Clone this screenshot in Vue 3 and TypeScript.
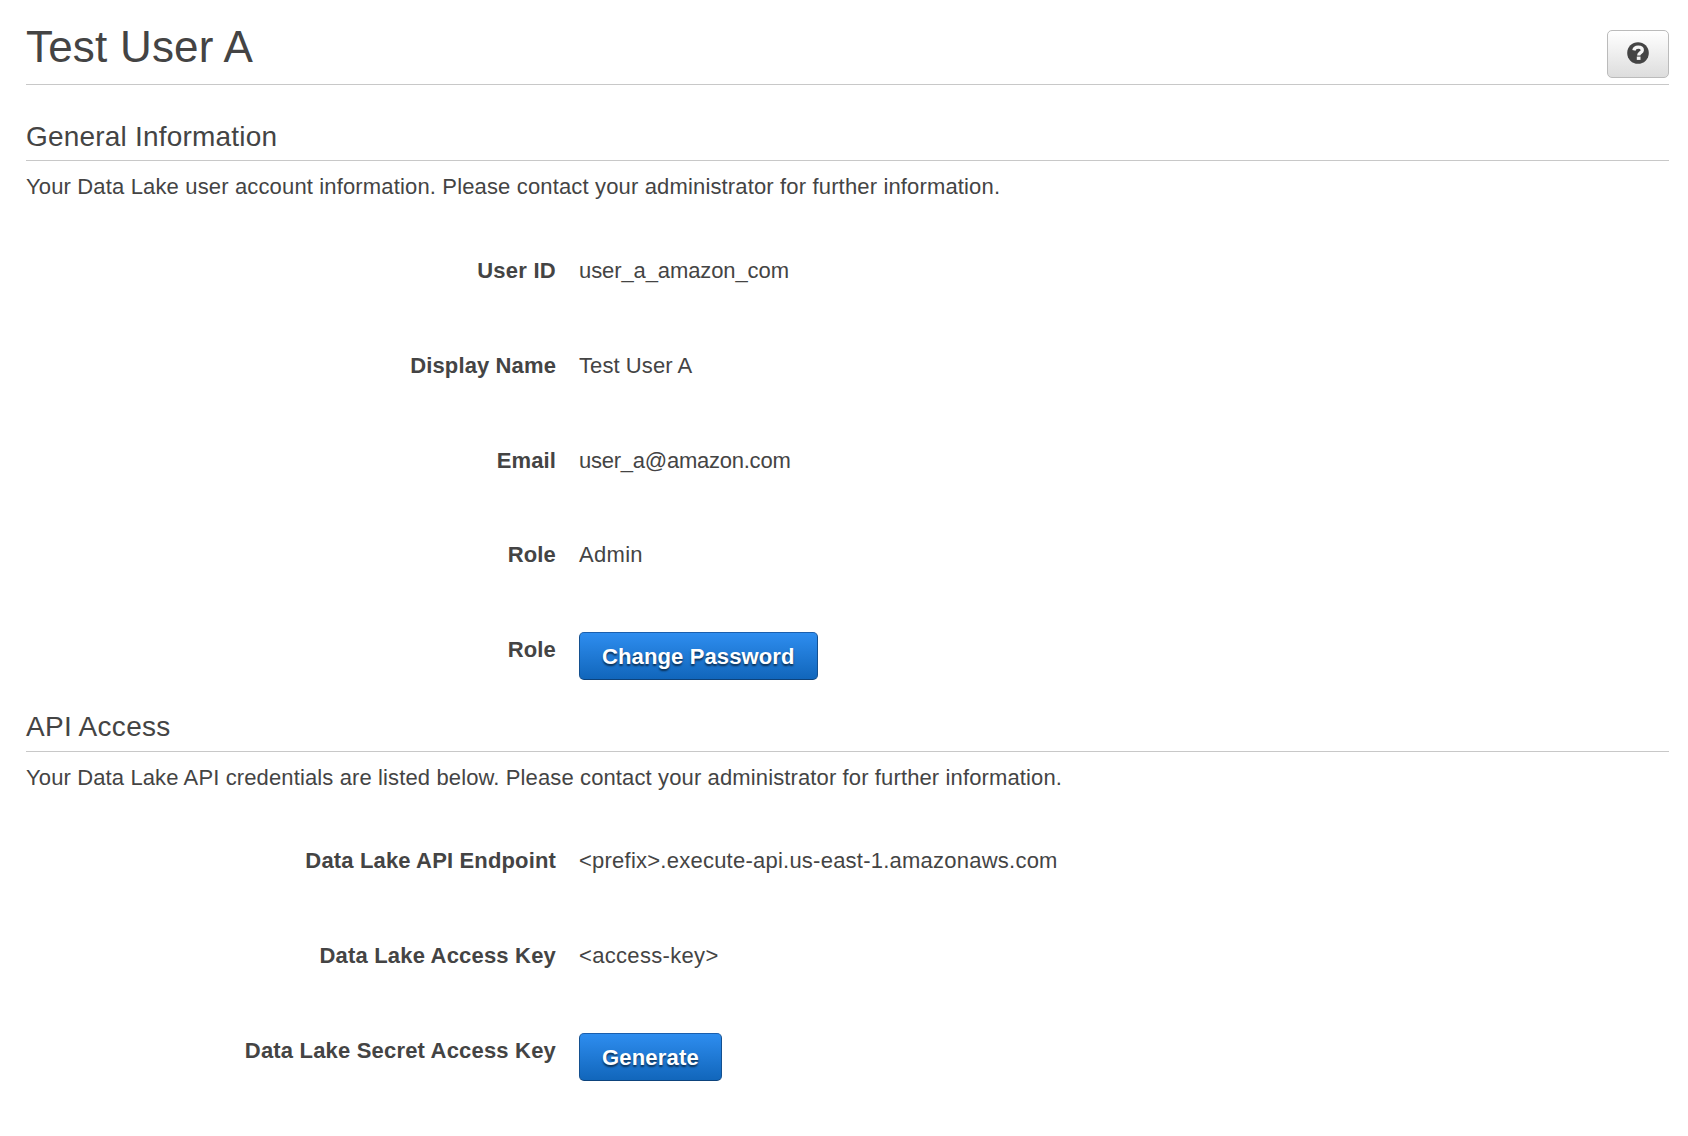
<script setup lang="ts">
interface Field {
  label: string
  value?: string
  action?: string
  labelSpacing: number
  spacing: number
}

interface Section {
  title: string
  intro: string
  titleSpacing: number
  introSpacing: number
  fields: Field[]
}

const sections: Section[] = [
  {
    title: 'General Information',
    intro: 'Your Data Lake user account information. Please contact your administrator for further information.',
    titleSpacing: 0.2,
    introSpacing: 0.152,
    fields: [
      { label: 'User ID', value: 'user_a_amazon_com', labelSpacing: 0.25, spacing: -0.1 },
      { label: 'Display Name', value: 'Test User A', labelSpacing: 0.12, spacing: 0.08 },
      { label: 'Email', value: 'user_a@amazon.com', labelSpacing: 0.1, spacing: -0.24 },
      { label: 'Role', value: 'Admin', labelSpacing: 0.15, spacing: 0.3 },
      { label: 'Role', action: 'Change Password', labelSpacing: 0.15, spacing: 0.12 },
    ],
  },
  {
    title: 'API Access',
    intro: 'Your Data Lake API credentials are listed below. Please contact your administrator for further information.',
    titleSpacing: 0.3,
    introSpacing: 0.124,
    fields: [
      { label: 'Data Lake API Endpoint', value: '<prefix>.execute-api.us-east-1.amazonaws.com', labelSpacing: 0.15, spacing: 0.235 },
      { label: 'Data Lake Access Key', value: '<access-key>', labelSpacing: 0.19, spacing: 0.32 },
      { label: 'Data Lake Secret Access Key', action: 'Generate', labelSpacing: 0.185, spacing: 0.194 },
    ],
  },
]
</script>

<template>
  <main class="page">
    <header class="page-header">
      <h1>Test User A</h1>
      <button class="help" type="button" aria-label="Help">
        <svg width="22" height="22" viewBox="0 0 22 22" aria-hidden="true">
          <circle cx="11" cy="11" r="10.8" fill="#444" />
          <path d="M6.900 8.400C7.300 6.100 8.900 5.200 11.200 5.200c2.400 0 4.100 1.150 4.100 3 0 2.500-3.600 2.400-3.600 5.200" fill="none" stroke="#f5f5f5" stroke-width="3.300" />
          <rect x="9.800" y="14.600" width="3.700" height="3.300" fill="#f5f5f5" />
        </svg>
      </button>
    </header>

    <section v-for="section in sections" :key="section.title" class="section">
      <h2 :style="{ letterSpacing: section.titleSpacing + 'px' }">{{ section.title }}</h2>
      <p class="intro" :style="{ letterSpacing: section.introSpacing + 'px' }">{{ section.intro }}</p>
      <dl class="fields">
        <div v-for="(field, i) in section.fields" :key="i" class="field">
          <dt :style="{ letterSpacing: field.labelSpacing + 'px' }">{{ field.label }}</dt>
          <dd :style="{ letterSpacing: field.spacing + 'px' }">
            <button v-if="field.action" class="primary" type="button">{{ field.action }}</button>
            <span v-else class="value">{{ field.value }}</span>
          </dd>
        </div>
      </dl>
    </section>
  </main>
</template>

<style>
body {
  background: #fff;
}
</style>

<style scoped>
.page {
  box-sizing: border-box;
  min-height: 1136px;
  padding: 22px 19px 0 26px;
  color: #444;
  font: 22px/25px "Liberation Sans", Arial, sans-serif;
}

.page-header {
  display: flex;
  justify-content: space-between;
  align-items: flex-start;
  height: 62px;
  margin-bottom: 36px;
  border-bottom: 1px solid #c8c8c8;
}

h1 {
  margin: 0;
  font-size: 44px;
  font-weight: 400;
  letter-spacing: 0.2px;
  line-height: 49px;
}

.help {
  display: flex;
  justify-content: center;
  align-items: center;
  box-sizing: border-box;
  width: 62px;
  height: 48px;
  margin-top: 8px;
  padding: 0 0 2px;
  border: 1px solid #bbb;
  border-radius: 5px;
  background: linear-gradient(#fff, #ddd);
}

h2 {
  margin: 0 0 13px;
  padding-bottom: 8px;
  border-bottom: 1px solid #c8c8c8;
  font-size: 28px;
  font-weight: 400;
  line-height: 31px;
}

.section + .section h2 {
  padding-bottom: 9px;
}

.intro {
  margin: 0 0 54px;
}

.section + .section .intro {
  margin-bottom: 53px;
}

.fields {
  margin: 0;
}

.field {
  display: flex;
  gap: 23px;
  height: 94.8px;
}

.field:last-child {
  height: 78.8px;
}

dt {
  width: 530px;
  padding-top: 5px;
  font-weight: 700;
  text-align: right;
}

dd {
  margin: 0;
}

.value {
  display: block;
  padding-top: 5px;
}

.primary {
  display: block;
  box-sizing: border-box;
  height: 48px;
  padding: 1px 22px 0;
  border: 1px solid;
  border-color: #1a5fae #14508f #0d437c;
  border-radius: 5px;
  background: linear-gradient(#2e8def, #1166bb);
  color: #fff;
  font: 700 22px/25px "Liberation Sans", Arial, sans-serif;
  letter-spacing: inherit;
  text-shadow: 0 2px 2px rgba(0, 0, 0, 0.6);
}
</style>
